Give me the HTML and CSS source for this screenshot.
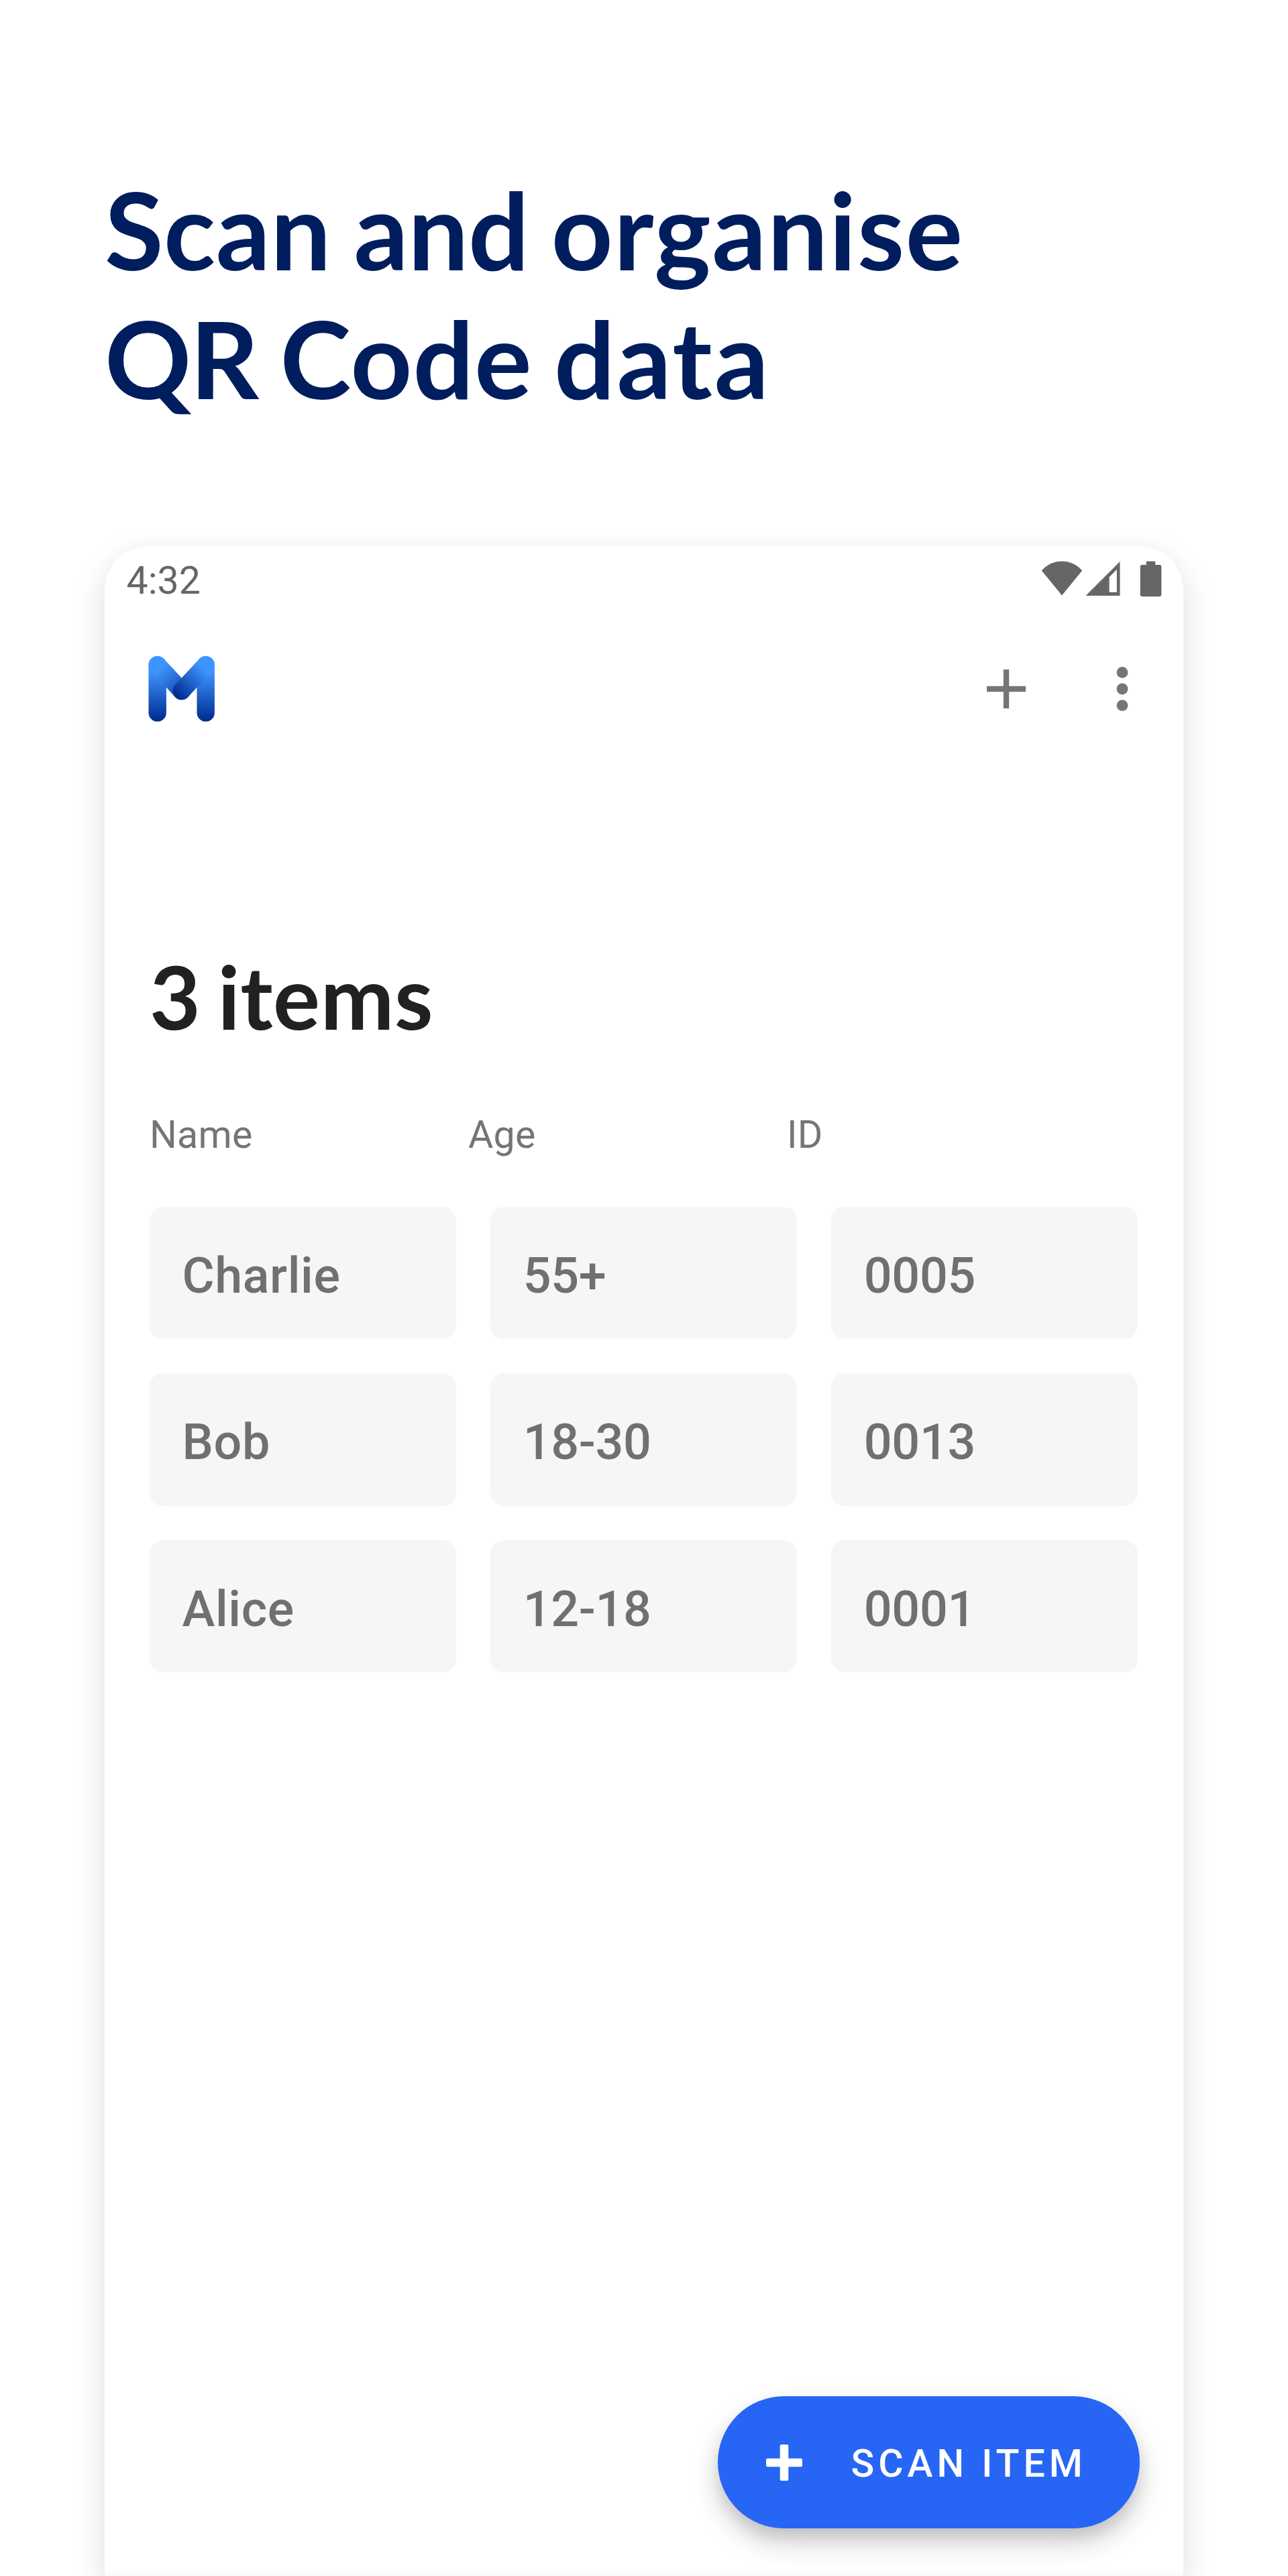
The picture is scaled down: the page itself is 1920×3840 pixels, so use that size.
FILE: index.html
```html
<!DOCTYPE html>
<html lang="en">
<head>
<meta charset="utf-8">
<title>Scan and organise QR Code data</title>
<link rel="stylesheet" href="styles.css">
</head>
<body>
<main class="page">
  <h1 class="headline"><span class="k-scan">Scan</span> <span class="k-and">and</span> <span class="k-organise">organise</span><br><span class="k-qr">QR</span> <span class="k-code">Code</span> <span class="k-data">data</span></h1>
  <section class="phone">
    <div class="status-bar">
      <span class="clock">4:32</span>
      <svg class="status-icons" width="180" height="54" viewBox="1552 836 180 54" fill="#666">
        <path d="M1552.7 850.6Q1565 836.7 1583 836.7T1613.2 850.6L1583 887.6Z"/>
        <path fill-rule="evenodd" d="M1618.5 888L1669.5 837V888ZM1653.6 882.8H1664.8V849L1653.6 860.2Z"/>
        <path d="M1708.8 836.7H1722.2V842H1728.3Q1731.3 842 1731.3 845V886.3Q1731.3 889.3 1728.3 889.3H1702.7Q1699.7 889.3 1699.7 886.3V845Q1699.7 842 1702.7 842H1708.8Z"/>
      </svg>
    </div>
    <header class="app-bar">
      <svg class="logo" width="100" height="100" viewBox="0 0 100 100" fill="none" stroke-width="26.4" stroke-linecap="round">
        <defs>
          <linearGradient id="stem" gradientUnits="userSpaceOnUse" x1="0" y1="24" x2="0" y2="97"><stop stop-color="#3e94ff"/><stop offset="1" stop-color="#002c8f"/></linearGradient>
          <linearGradient id="left" gradientUnits="userSpaceOnUse" x1="18" y1="19" x2="59" y2="63"><stop stop-color="#3e94ff"/><stop offset="1" stop-color="#0a3a9f"/></linearGradient>
          <linearGradient id="right" gradientUnits="userSpaceOnUse" x1="82" y1="19" x2="42" y2="60"><stop stop-color="#3e94ff"/><stop offset="1" stop-color="#002c8f"/></linearGradient>
        </defs>
        <path stroke="url(#stem)" d="M13.7 14.2V85.4M85.7 14.2V85.4"/>
        <path stroke="url(#left)" d="M13.7 14.2L49.7 53"/>
        <path stroke="url(#right)" d="M85.7 14.2L49.7 53"/>
      </svg>
      <div class="actions">
        <svg width="58" height="58" viewBox="0 0 58 58" fill="#757575"><path d="M24.8 0h8.4v24.8H58v8.4H33.2V58h-8.4V33.2H0v-8.4h24.8z"/></svg>
        <svg width="18" height="66" viewBox="0 0 18 66" fill="#757575"><circle cx="9" cy="8.4" r="8.4"/><circle cx="9" cy="33" r="8.4"/><circle cx="9" cy="57.6" r="8.4"/></svg>
      </div>
    </header>
    <h2 class="title">3 items</h2>
    <div class="labels"><span>Name</span><span>Age</span><span>ID</span></div>
    <div class="cells">
      <div class="cell name">Charlie</div><div class="cell">55+</div><div class="cell">0005</div>
      <div class="cell name">Bob</div><div class="cell">18-30</div><div class="cell">0013</div>
      <div class="cell name">Alice</div><div class="cell">12-18</div><div class="cell">0001</div>
    </div>
    <button class="scan">
      <svg width="54" height="54" viewBox="0 0 54 54" fill="#fff"><rect x="20.7" width="12.6" height="54" rx="2.5"/><rect y="20.7" width="54" height="12.6" rx="2.5"/></svg>
      <span class="scan-label">SCAN ITEM</span>
    </button>
    <div class="nav-edge"></div>
  </section>
</main>
</body>
</html>
```
FILE: styles.css
```css
* { box-sizing: border-box; }
body { margin: 0; background: #fff; }
.page {
  height: 3840px;
  padding: 245px 156px 0;
  display: flex;
  flex-direction: column;
  overflow: hidden;
}
.headline {
  margin: 0;
  height: 569px;
  font: 700 160px/192px Lato, sans-serif;
  word-spacing: -5.5px;
  color: #001d5e;
}
.k-scan { letter-spacing: 0.5px; }
.k-and { letter-spacing: -0.5px; }
.k-organise { letter-spacing: 1.5px; }
.k-qr { letter-spacing: -2px; }
.k-code { letter-spacing: 0.9px; }
.k-data { letter-spacing: 2.8px; margin-left: -1px; }
.phone {
  flex: 1;
  display: flex;
  flex-direction: column;
  background: #fff;
  border-radius: 66px 66px 0 0;
  box-shadow: 0 16px 48px rgba(0, 0, 0, 0.14);
  font-family: Roboto, sans-serif;
}
.status-bar {
  height: 98px;
  padding: 22px 32px 0 32.5px;
  display: flex;
  justify-content: space-between;
}
.clock { font-size: 57.3px; line-height: 60px; color: #666; }
.app-bar {
  height: 230px;
  padding: 0 82px 0 64.5px;
  display: flex;
  align-items: center;
  justify-content: space-between;
}
.logo { display: block; }
.actions { display: flex; align-items: center; gap: 135px; }
.title {
  margin: 265px 0 0 67px;
  font: 700 131px/156px Lato, sans-serif;
  letter-spacing: 0.6px;
  word-spacing: -7.6px;
  color: #212121;
}
.labels {
  margin: 96px 67px 0;
  display: grid;
  grid-template-columns: repeat(3, 475px);
  font-size: 57.3px;
  line-height: 66px;
  letter-spacing: 0.2px;
  color: #757575;
}
.cells {
  margin: 73.6px 67.6px 0 66.5px;
  display: grid;
  grid-template-columns: repeat(3, 1fr);
  gap: 51px 50.5px;
}
.cell {
  height: 197.5px;
  padding-left: 49px;
  border-radius: 20px;
  background: #f6f6f6;
  color: #707070;
  font-weight: 500;
  font-size: 73.7px;
  line-height: 206px;
  letter-spacing: -0.3px;
}
.name { letter-spacing: 0.6px; }
.scan {
  align-self: flex-end;
  margin: auto 65.5px 65.5px 0;
  width: 629px;
  height: 197px;
  padding: 0 0 0 72px;
  display: flex;
  align-items: center;
  gap: 73px;
  border: 0;
  border-radius: 99px;
  background: #2765f5;
  color: #fff;
  font: 500 57.3px/66px Roboto, sans-serif;
  letter-spacing: 5.95px;
  white-space: nowrap;
  box-shadow: 0 20px 40px rgba(0, 0, 0, 0.2), 0 12px 20px rgba(0, 0, 0, 0.08);
}
.scan-label { padding-top: 5.5px; }
.nav-edge { height: 5.5px; background: #fafafa; }
```
